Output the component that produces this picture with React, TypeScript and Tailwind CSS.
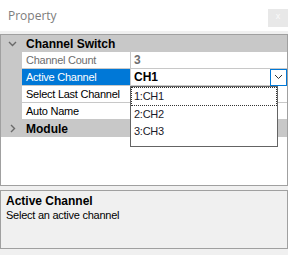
import { ReactNode } from "react";

const sans = "font-['Liberation_Sans',Arial,sans-serif]";

function Chevron({ open }: { open: boolean }) {
  return (
    <svg width="9" height="9" viewBox="0 0 9 9" className="text-[#6a6a6a]">
      {open ? (
        <polyline points="1,3 4.5,6.5 8,3" fill="none" stroke="currentColor" strokeWidth="1.4" />
      ) : (
        <polyline points="3,1 6.5,4.5 3,8" fill="none" stroke="currentColor" strokeWidth="1.4" />
      )}
    </svg>
  );
}

function Category({ title, open }: { title: string; open: boolean }) {
  return (
    <div className="flex h-[17px] items-center bg-[#c8c8c8]">
      <div className="flex w-[21px] justify-center pl-[1px]">
        <Chevron open={open} />
      </div>
      <span className="pl-[4px] text-[12px] font-bold leading-none text-black">{title}</span>
    </div>
  );
}

function Row({ label, value, muted, selected, children }: { label: string; value?: string; muted?: boolean; selected?: boolean; children?: ReactNode }) {
  return (
    <div className="flex h-[17px] border-b border-[#c8c8c8] bg-[#c8c8c8]">
      <div className="w-[21px]" />
      <div className={`flex w-[108px] items-center pl-[4px] text-[11px] leading-none tracking-[-0.25px] ${selected ? "bg-[#0078d7] text-white" : muted ? "bg-white text-[#6d6d6d]" : "bg-white text-black"}`}>
        {label}
      </div>
      <div className="relative ml-px flex flex-1 items-center bg-white pl-[3px]">
        {value ? <span className={`text-[12px] font-bold leading-none ${muted ? "text-[#6d6d6d]" : "text-black"}`}>{value}</span> : null}
        {children}
      </div>
    </div>
  );
}

export default function App() {
  return (
    <div className={`flex h-[255px] w-[288px] flex-col bg-[#f0f0f0] ${sans}`}>
      <div className="flex h-[31px] items-center justify-between bg-white pl-2">
        <span className="font-['Open_Sans',sans-serif] text-[12px] text-[#7c7c7c]">Property</span>
        <div className="mt-[9px] flex h-[18px] w-5 items-center justify-center self-start bg-[#e8e8e8] pb-[2px] text-[9px] text-[#fafafa]">x</div>
      </div>

      <div className="relative mt-[3px] h-[152px] border border-[#a0a0a0] bg-white">
        <Category title="Channel Switch" open />
        <Row label="Channel Count" value="3" muted />
        <Row label="Active Channel" value="CH1" selected>
          <div className="ml-auto flex h-[17px] w-[17px] items-center justify-center border border-[#0078d7] bg-white">
            <svg width="9" height="6" viewBox="0 0 9 6">
              <polyline points="1,1 4.5,4.5 8,1" fill="none" stroke="#333" strokeWidth="1" />
            </svg>
          </div>
        </Row>
        <Row label="Select Last Channel" />
        <Row label="Auto Name" />
        <Category title="Module" open={false} />

        <div className="absolute left-[129px] top-[51px] flex h-[61px] w-[148px] flex-col border border-[#646464] bg-white text-[11px] tracking-[-0.25px] text-[#1a1a2a]">
          <div className="flex h-[19px] items-center border border-dotted border-[#333] pl-[2px]">1:CH1</div>
          <div className="flex h-[17px] items-center pl-[3px]">2:CH2</div>
          <div className="flex h-[17px] items-center pl-[3px]">3:CH3</div>
        </div>
      </div>

      <div className="mt-[4px] h-[59px] border border-[#a0a0a0] bg-[#f0f0f0] px-[5px] pt-[4px] leading-none">
        <div className="text-[12px] font-bold text-black">Active Channel</div>
        <div className="mt-[3px] text-[11px] tracking-[-0.25px] text-black">Select an active channel</div>
      </div>
    </div>
  );
}
